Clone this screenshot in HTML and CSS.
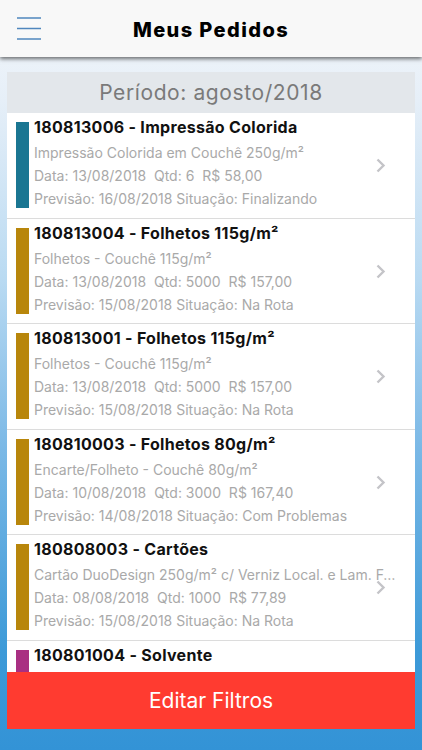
FILE: index.html
```html
<!DOCTYPE html>
<html lang="pt-BR">
<head>
<meta charset="utf-8">
<title>Meus Pedidos</title>
<link rel="stylesheet" href="styles.css">
</head>
<body>
<header class="topbar">
  <button class="menu" aria-label="Menu">
    <svg width="24" height="24" viewBox="0 0 24 24"><path d="M0 1h24M0 11.5h24M0 22h24" stroke="#4f86bd" stroke-width="1.6" fill="none"/></svg>
  </button>
  <h1 class="title">Meus Pedidos</h1>
</header>
<main class="panel">
  <div class="period">Período: agosto/2018</div>
  <ul class="list">
    <li class="row">
      <span class="bar teal"></span>
      <div class="info">
        <div class="name">180813006 - Impressão Colorida</div>
        <div class="line">Impressão Colorida em Couchê 250g/m²</div>
        <div class="line">Data: 13/08/2018&nbsp; Qtd: 6&nbsp; R$ 58,00</div>
        <div class="line">Previsão: 16/08/2018 Situação: Finalizando</div>
      </div>
      <svg class="chev" width="10" height="15" viewBox="0 0 10 15"><path d="M1.5 1.5l6 6-6 6" stroke="#c4c4c8" stroke-width="2.4" fill="none"/></svg>
    </li>
    <li class="row">
      <span class="bar gold"></span>
      <div class="info">
        <div class="name">180813004 - Folhetos 115g/m²</div>
        <div class="line">Folhetos - Couchê 115g/m²</div>
        <div class="line">Data: 13/08/2018&nbsp; Qtd: 5000&nbsp; R$ 157,00</div>
        <div class="line">Previsão: 15/08/2018 Situação: Na Rota</div>
      </div>
      <svg class="chev" width="10" height="15" viewBox="0 0 10 15"><path d="M1.5 1.5l6 6-6 6" stroke="#c4c4c8" stroke-width="2.4" fill="none"/></svg>
    </li>
    <li class="row">
      <span class="bar gold"></span>
      <div class="info">
        <div class="name">180813001 - Folhetos 115g/m²</div>
        <div class="line">Folhetos - Couchê 115g/m²</div>
        <div class="line">Data: 13/08/2018&nbsp; Qtd: 5000&nbsp; R$ 157,00</div>
        <div class="line">Previsão: 15/08/2018 Situação: Na Rota</div>
      </div>
      <svg class="chev" width="10" height="15" viewBox="0 0 10 15"><path d="M1.5 1.5l6 6-6 6" stroke="#c4c4c8" stroke-width="2.4" fill="none"/></svg>
    </li>
    <li class="row">
      <span class="bar gold"></span>
      <div class="info">
        <div class="name">180810003 - Folhetos 80g/m²</div>
        <div class="line">Encarte/Folheto - Couchê 80g/m²</div>
        <div class="line">Data: 10/08/2018&nbsp; Qtd: 3000&nbsp; R$ 167,40</div>
        <div class="line">Previsão: 14/08/2018 Situação: Com Problemas</div>
      </div>
      <svg class="chev" width="10" height="15" viewBox="0 0 10 15"><path d="M1.5 1.5l6 6-6 6" stroke="#c4c4c8" stroke-width="2.4" fill="none"/></svg>
    </li>
    <li class="row">
      <span class="bar gold"></span>
      <div class="info">
        <div class="name">180808003 - Cartões</div>
        <div class="line">Cartão DuoDesign 250g/m² c/ Verniz Local. e Lam. Fosca</div>
        <div class="line">Data: 08/08/2018&nbsp; Qtd: 1000&nbsp; R$ 77,89</div>
        <div class="line">Previsão: 15/08/2018 Situação: Na Rota</div>
      </div>
      <svg class="chev" width="10" height="15" viewBox="0 0 10 15"><path d="M1.5 1.5l6 6-6 6" stroke="#c4c4c8" stroke-width="2.4" fill="none"/></svg>
    </li>
    <li class="row">
      <span class="bar magenta"></span>
      <div class="info">
        <div class="name">180801004 - Solvente</div>
        <div class="line">Impressão Solvente em Lona</div>
        <div class="line">Data: 01/08/2018&nbsp; Qtd: 1&nbsp; R$ 90,00</div>
        <div class="line">Previsão: 06/08/2018 Situação: Entregue</div>
      </div>
      <svg class="chev" width="10" height="15" viewBox="0 0 10 15"><path d="M1.5 1.5l6 6-6 6" stroke="#c4c4c8" stroke-width="2.4" fill="none"/></svg>
    </li>
  </ul>
  <button class="filters">Editar Filtros</button>
</main>
</body>
</html>
```

FILE: styles.css
```css
* { box-sizing: border-box; }
html, body { margin: 0; padding: 0; }
body {
  width: 422px;
  height: 750px;
  overflow: hidden;
  display: flex;
  flex-direction: column;
  font-family: Inter, "Liberation Sans", Arial, sans-serif;
  background: linear-gradient(to bottom, #f4f7fa 0px, #e6eff8 100px, #b9daf2 280px, #7ab8e6 450px, #3d9ad8 650px, #3393d6 750px);
}
.topbar {
  position: relative;
  z-index: 2;
  height: 57px;
  flex: 0 0 57px;
  background: #f8f8f8;
  box-shadow: 0 2px 4px rgba(0, 0, 0, 0.55);
  display: flex;
  align-items: center;
  justify-content: center;
}
.menu {
  position: absolute;
  left: 17px;
  top: 17px;
  width: 24px;
  height: 24px;
  padding: 0;
  border: 0;
  background: none;
}
.menu svg { display: block; }
.title {
  margin: 0 0 -2px;
  font-size: 20px;
  font-weight: 800;
  color: #000;
  letter-spacing: 1.4px;
}
.panel {
  margin: 15px 7px 21px;
  flex: 1;
  display: flex;
  flex-direction: column;
  min-height: 0;
}
.period {
  flex: 0 0 41px;
  height: 41px;
  background: #e3e7eb;
  color: #7a7a7a;
  font-size: 21px;
  line-height: 42px;
  letter-spacing: 0.6px;
  text-align: center;
}
.list {
  flex: 1;
  min-height: 0;
  overflow: hidden;
  margin: 0;
  padding: 0;
  list-style: none;
  background: #fff;
}
.row {
  position: relative;
  height: 105.5px;
  display: flex;
  align-items: flex-start;
  padding: 5px 12px 0 9px;
  border-bottom: 1px solid #dcdcdc;
}
.bar {
  flex: 0 0 13px;
  width: 13px;
  height: 86px;
  margin-top: 4px;
}
.teal { background: #1a7692; }
.gold { background: #b8860b; }
.magenta { background: #a92f82; }
.info {
  flex: 1;
  min-width: 0;
  margin-left: 5px;
}
.name {
  font-size: 16px;
  font-weight: 700;
  line-height: 19px;
  letter-spacing: 0.3px;
  color: #111;
  margin-bottom: 4px;
  white-space: nowrap;
}
.line {
  font-size: 14px;
  line-height: 23px;
  color: #a9a9a9;
  white-space: nowrap;
  overflow: hidden;
  text-overflow: ellipsis;
}
.chev {
  position: absolute;
  left: 369px;
  top: 45px;
}
.filters {
  flex: 0 0 57px;
  height: 57px;
  border: 0;
  padding: 0;
  background: #ff3b30;
  color: #fff;
  font-family: inherit;
  font-size: 21px;
}
```
